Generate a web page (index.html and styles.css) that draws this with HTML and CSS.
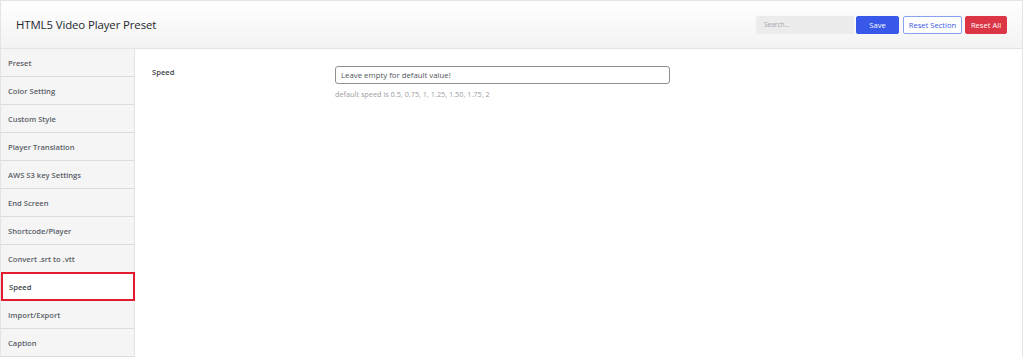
FILE: index.html
```html
<!DOCTYPE html>
<html>
<head>
<meta charset="utf-8">
<link rel="stylesheet" href="styles.css">
</head>
<body>
<div class="page">
  <header class="header">
    <h1 class="title">HTML5 Video Player Preset</h1>
    <div class="actions">
      <input class="search" type="text" placeholder="Search...">
      <button class="btn btn-save">Save</button>
      <button class="btn btn-section">Reset Section</button>
      <button class="btn btn-all">Reset All</button>
    </div>
  </header>
  <div class="body">
    <nav class="sidebar">
      <div class="item">Preset</div>
      <div class="item">Color Setting</div>
      <div class="item">Custom Style</div>
      <div class="item">Player Translation</div>
      <div class="item">AWS S3 key Settings</div>
      <div class="item">End Screen</div>
      <div class="item">Shortcode/Player</div>
      <div class="item">Convert .srt to .vtt</div>
      <div class="item active">Speed</div>
      <div class="item">Import/Export</div>
      <div class="item">Caption</div>
    </nav>
    <main class="content">
      <div class="field">
        <div class="label">Speed</div>
        <div class="control">
          <input class="text" type="text" placeholder="Leave empty for default value!">
          <div class="help">default speed is 0.5, 0.75, 1, 1.25, 1.50, 1.75, 2</div>
        </div>
      </div>
    </main>
  </div>
</div>
</body>
</html>
```

FILE: styles.css
```css
* { box-sizing: border-box; }
html, body { margin: 0; padding: 0; background: #fff; }
body { font-family: "Open Sans", "Noto Sans", sans-serif; color: #3c434a; }
.page {
  width: 1023px;
  height: 357px;
  border: 1px solid #e2e4e7;
  border-bottom: none;
  overflow: hidden;
}
.header {
  height: 48px;
  display: flex;
  align-items: center;
  justify-content: space-between;
  padding: 0 15px 0 15px;
  background: linear-gradient(#ffffff, #f3f3f3);
  border-bottom: 1px solid #e2e4e7;
}
.title {
  margin: 0;
  font-size: 11.4px;
  font-weight: 400;
  color: #23282d;
  letter-spacing: -0.1px;
}
.actions { display: flex; align-items: center; gap: 3px; }
.search {
  width: 98px;
  height: 18px;
  border: none;
  background: #ececec;
  border-radius: 2px;
  font-family: inherit;
  font-size: 6.5px;
  padding: 0 8px;
  margin-right: -1px;
}
.search::placeholder { color: #a0a5aa; }
.btn {
  height: 18px;
  font-family: inherit;
  font-size: 7.6px;
  border-radius: 2px;
  padding: 0;
  cursor: pointer;
}
.btn-save { width: 43px; background: #3858e9; color: #fff; border: 1px solid #3858e9; }
.btn-section { width: 59px; background: #fff; color: #3858e9; border: 1px solid #8ca0f2; margin-left: 1px; }
.btn-all { width: 42px; background: #dc3545; color: #fff; border: 1px solid #dc3545; }
.body { display: flex; height: 308px; }
.sidebar {
  width: 134px;
  flex: none;
  background: #f5f5f5;
  border-right: 1px solid #e2e4e7;
}
.item {
  height: 28px;
  border-bottom: 1px solid #dcdcde;
  display: flex;
  align-items: center;
  padding-left: 7px;
  font-size: 7.6px;
  font-weight: 600;
  color: #5a6067;
}
.item.active {
  background: #fff;
  border: 2px solid #e21b31;
  padding-left: 6px;
  margin-top: -1px;
  height: 29px;
  margin-right: -1px;
  color: #3c434a;
}
.content { flex: 1; padding: 17px 0 0 17px; }
.field { display: flex; }
.label {
  width: 183px;
  font-size: 7.6px;
  font-weight: 600;
  color: #3c434a;
  padding-top: 1px;
}
.control { display: flex; flex-direction: column; }
.text {
  width: 335px;
  height: 18px;
  border: 1px solid #8c8f94;
  border-radius: 3px;
  font-family: inherit;
  font-size: 7.8px;
  padding: 0 5px;
  color: #3c434a;
}
.text::placeholder { color: #50575e; }
.help { margin-top: 5px; font-size: 7.3px; color: #9a9ea3; }
```
